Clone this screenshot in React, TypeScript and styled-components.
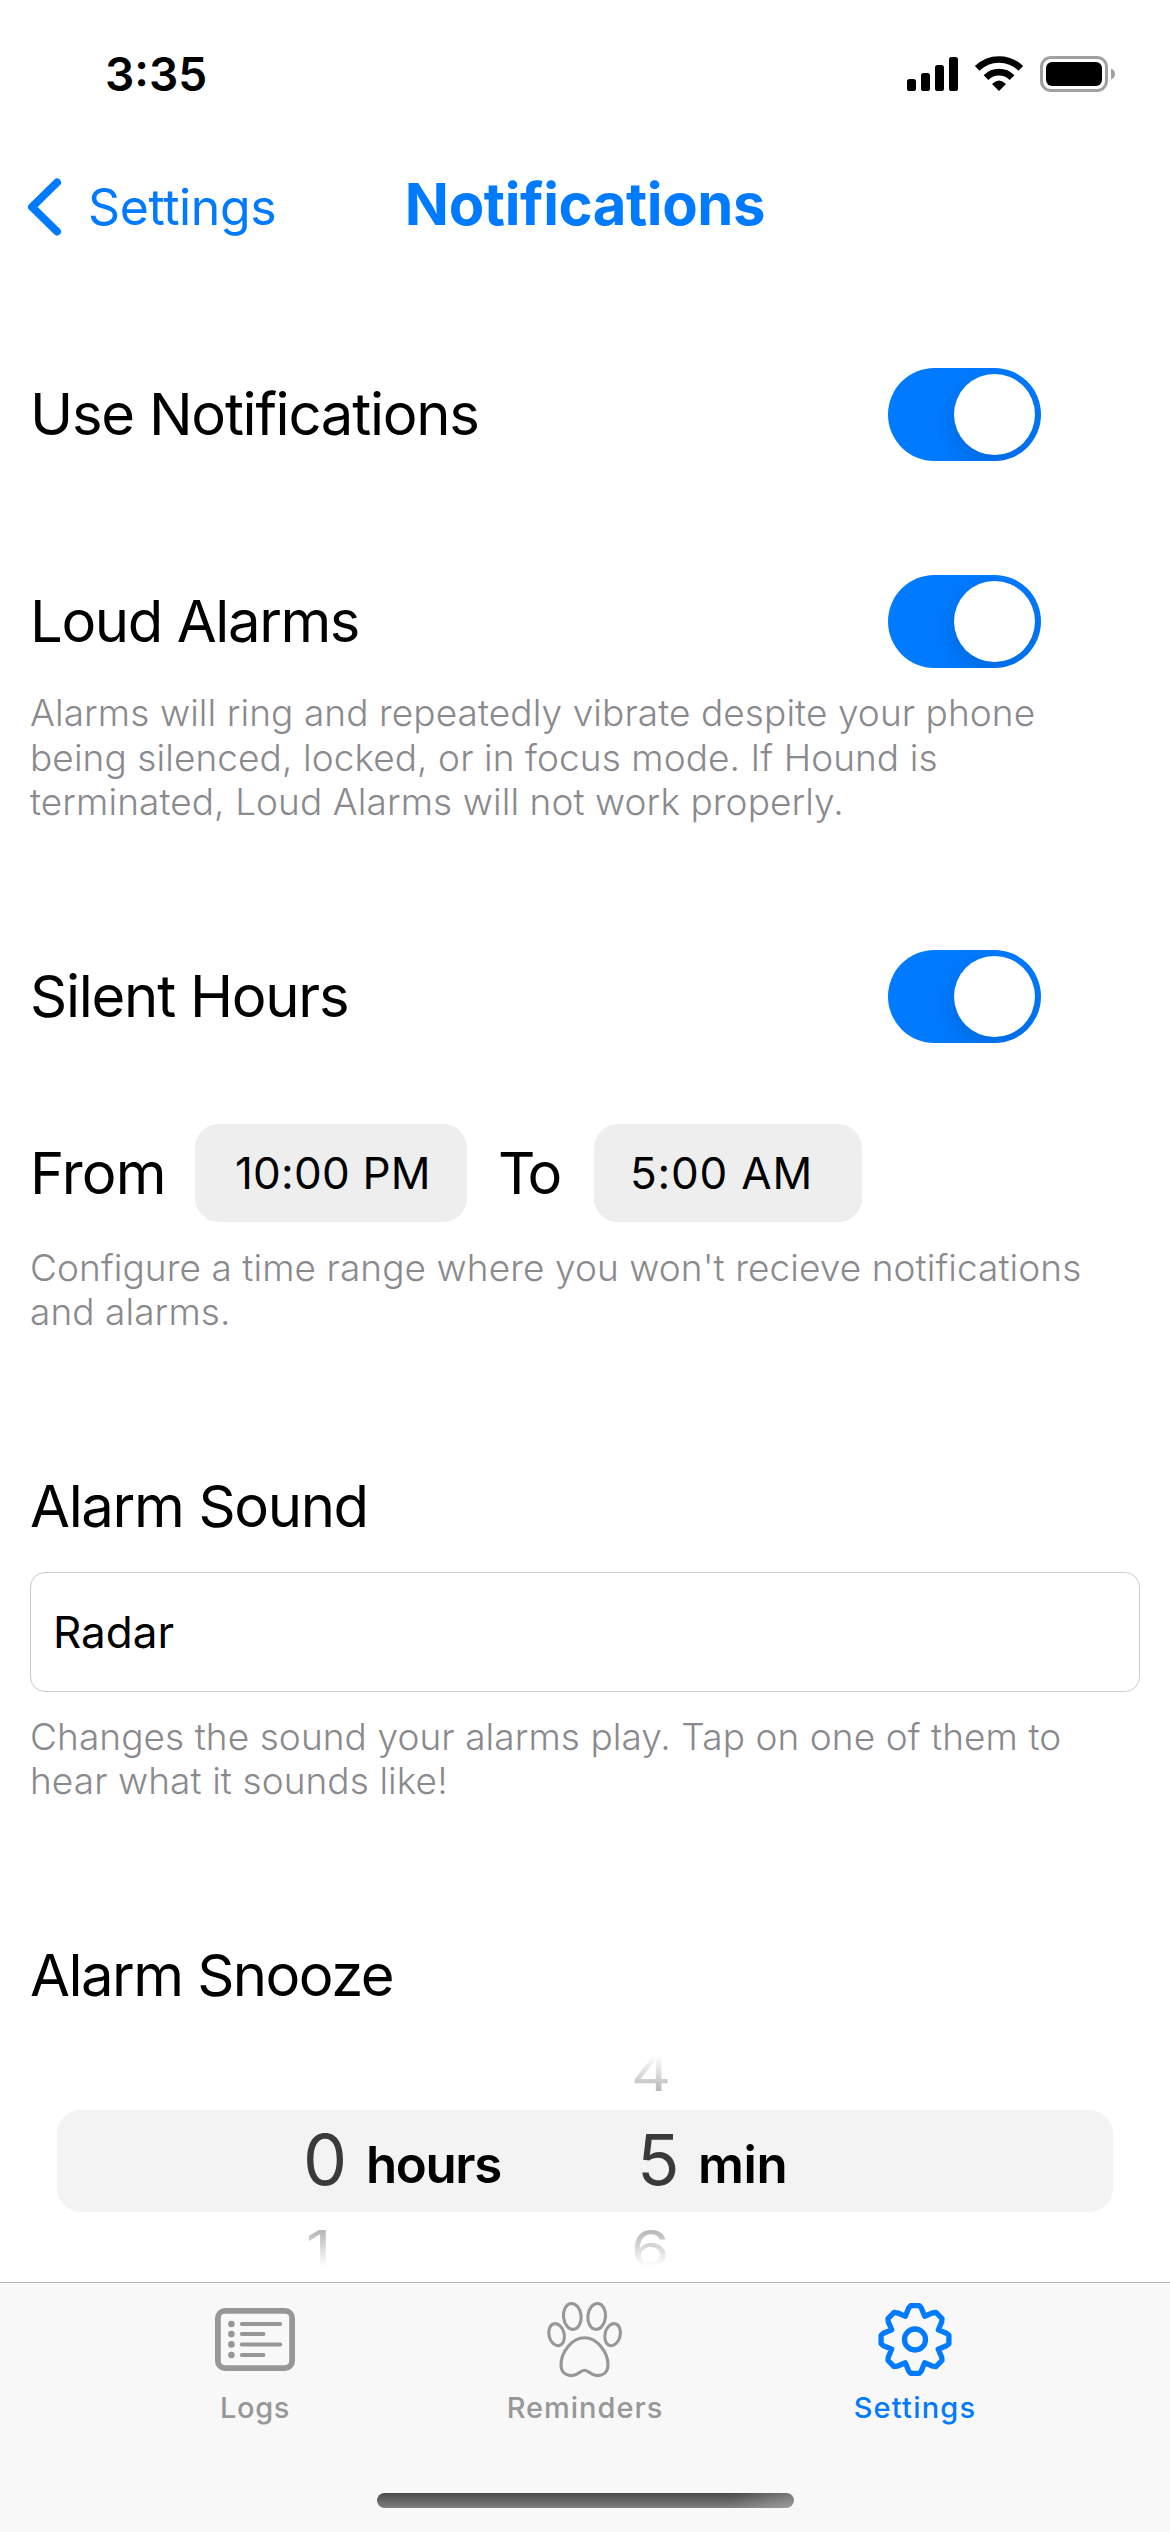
import React from 'react';
import styled, { createGlobalStyle } from 'styled-components';

const BLUE = '#007aff';
const GRAY = '#979797';

const GlobalStyle = createGlobalStyle`
  * { box-sizing: border-box; }
  body { margin: 0; background: #fff; }
`;

const Screen = styled.div`
  width: 1170px;
  height: 2532px;
  display: flex;
  flex-direction: column;
  overflow: hidden;
  background: #fff;
  color: #000;
  font-family: Inter, 'Liberation Sans', sans-serif;
  white-space: nowrap;
`;

const StatusBar = styled.header`
  height: 148px;
  flex: none;
  display: flex;
  align-items: center;
  justify-content: space-between;
  padding: 0 50px 0 105px;
`;

const Clock = styled.time`
  font-size: 46px;
  font-weight: 600;
`;

const NavBar = styled.nav`
  height: 118px;
  flex: none;
  display: grid;
  grid-template-columns: 1fr auto 1fr;
  align-items: center;
  color: ${BLUE};
`;

const BackLink = styled.a`
  display: flex;
  align-items: center;
  gap: 23px;
  padding-left: 25px;
  font-size: 50px;
  letter-spacing: -0.4px;
`;

const Title = styled.h1`
  margin: 0 0 7px;
  font-size: 58px;
  font-weight: 700;
  letter-spacing: -0.4px;
`;

const Content = styled.main`
  height: 2016px;
  flex: none;
  display: flex;
  flex-direction: column;
  padding: 0 30px;
`;

const SettingRow = styled.div<{ $top: number }>`
  height: 93px;
  flex: none;
  display: flex;
  align-items: center;
  justify-content: space-between;
  margin-top: ${(p) => p.$top}px;
  padding-right: 99px;
`;

const Label = styled.h2<{ $track: number; $top?: number; $width?: number }>`
  flex: none;
  margin: ${(p) => p.$top ?? 0}px 0 0;
  width: ${(p) => (p.$width ? `${p.$width}px` : 'auto')};
  font-size: 58px;
  font-weight: 400;
  line-height: 70px;
  letter-spacing: ${(p) => p.$track}px;

  ${SettingRow} & {
    padding-bottom: 2px;
  }
`;

const Switch = styled.div`
  width: 153px;
  height: 93px;
  display: flex;
  justify-content: flex-end;
  padding: 6px;
  border-radius: 47px;
  overflow: hidden;
  background: ${BLUE};
`;

const Knob = styled.div`
  width: 81px;
  height: 81px;
  border-radius: 50%;
  background: #fff;
  box-shadow: 0 9px 24px rgba(0, 0, 0, 0.15);
`;

const Description = styled.p<{ $top: number }>`
  flex: none;
  margin: ${(p) => p.$top}px 0 0;
  color: #8a8a8e;
  font-size: 37px;
  font-weight: 300;
  line-height: 44.5px;
  letter-spacing: 0.08px;
`;

const TimeRange = styled.div`
  height: 98px;
  flex: none;
  display: flex;
  align-items: center;
  margin-top: 81px;
`;

const TimeButton = styled.div<{ $width: number; $inset: number; $track: number; $after?: number }>`
  width: ${(p) => p.$width}px;
  height: 98px;
  flex: none;
  margin-right: ${(p) => p.$after ?? 0}px;
  padding-left: ${(p) => p.$inset}px;
  border-radius: 24px;
  background: #eeeeef;
  font-size: 44px;
  line-height: 98px;
  letter-spacing: ${(p) => p.$track}px;
`;

const SoundField = styled.div`
  height: 120px;
  flex: none;
  margin-top: 31px;
  padding-left: 22px;
  border: 1px solid #cbcbcd;
  border-radius: 15px;
  font-size: 44px;
  line-height: 118px;
`;

const Picker = styled.div`
  flex: none;
  display: flex;
  flex-direction: column;
  gap: 7px;
  margin-top: 33px;
  padding: 0 27px;
`;

const columns = '246px 63px 271px 61px 1fr';

const WheelRow = styled.div<{ $fade: 'top' | 'bottom' }>`
  height: 60px;
  display: grid;
  grid-template-columns: ${columns};
  color: #b8b8b8;
  font-size: 62px;
  line-height: 60px;
  mask-image: linear-gradient(to ${(p) => p.$fade}, #000 12px, transparent 47px);
`;

const WheelDigit = styled.span<{ $column: number; $shift: number }>`
  grid-column: ${(p) => p.$column};
  margin-left: ${(p) => p.$shift}px;
  transform: scaleY(0.82);
`;

const SelectedRow = styled.div`
  height: 102px;
  display: grid;
  grid-template-columns: ${columns};
  border-radius: 24px;
  background: #f3f3f4;
`;

const SelectedDigit = styled.span<{ $column: number }>`
  grid-column: ${(p) => p.$column};
  color: #3a3a3a;
  font-size: 70px;
  font-weight: 400;
  line-height: 100px;
`;

const Unit = styled.span<{ $track: number }>`
  font-size: 51px;
  font-weight: 600;
  line-height: 109px;
  letter-spacing: ${(p) => p.$track}px;
`;

const TabBar = styled.footer`
  height: 250px;
  flex: none;
  display: flex;
  flex-direction: column;
  align-items: center;
  border-top: 1px solid #b3b3b3;
  background: #f8f8f8;
`;

const Tabs = styled.div`
  display: grid;
  grid-template-columns: repeat(3, 330px);
  height: 210px;
  padding-top: 17px;
`;

const Tab = styled.div<{ $active?: boolean; $track: number }>`
  display: flex;
  flex-direction: column;
  align-items: center;
  gap: 10px;
  color: ${(p) => (p.$active ? BLUE : GRAY)};
  font-size: 29px;
  font-weight: 500;
  line-height: 36px;
  letter-spacing: ${(p) => p.$track}px;
`;

const HomeIndicator = styled.div`
  width: 417px;
  height: 15px;
  border-radius: 8px;
  background: linear-gradient(to right, transparent 85%, rgba(255, 255, 255, 0.25)),
    linear-gradient(#494949, #808080);
`;

const StatusIcons = () => (
  <svg width="220" height="48" viewBox="0 0 220 48" fill="none">
    <g fill="#000">
      <rect x="7" y="29" width="9" height="12" rx="2.6" />
      <rect x="21" y="23" width="9" height="18" rx="2.6" />
      <rect x="35" y="15" width="9" height="26" rx="2.6" />
      <rect x="49" y="7" width="9" height="34" rx="2.6" />
      <path d="M92 34Q99 27 106 34L99 41Z" />
      <rect x="146" y="12" width="56" height="24" rx="6" />
    </g>
    <path d="M77.2 18.4A31 31 0 0 1 120.8 18.4" stroke="#000" strokeWidth="6.6" />
    <path d="M86 27.6A18.2 18.2 0 0 1 112 27.6" stroke="#000" strokeWidth="6.6" />
    <rect x="141.5" y="7.5" width="65" height="33" rx="9.5" stroke="#a0a0a0" strokeWidth="3" />
    <path d="M211 18.5Q215 20 215 24Q215 28 211 29.5Z" fill="#a0a0a0" />
  </svg>
);

const Chevron = () => (
  <svg width="40" height="64" viewBox="0 0 40 64" fill="none">
    <path
      d="M32 7.5L7 32L32 56.5"
      stroke="currentColor"
      strokeWidth="8"
      strokeLinecap="round"
      strokeLinejoin="round"
    />
  </svg>
);

const LogsIcon = () => (
  <svg width="80" height="80" viewBox="0 0 80 80" fill="none" stroke="currentColor">
    <rect x="2.9" y="10.9" width="74.2" height="57.2" rx="7" strokeWidth="5.8" />
    {[24, 34.1, 44.4, 55].map((y, i) => (
      <g key={y}>
        <circle cx="16.4" cy={y} r="3.3" fill="currentColor" stroke="none" />
        <path d={`M26.8 ${y}H${i % 2 ? 48.5 : 65.2}`} strokeWidth="4" strokeLinecap="round" />
      </g>
    ))}
  </svg>
);

const PawIcon = () => (
  <svg width="80" height="80" viewBox="0 0 80 80" fill="none" stroke="currentColor" strokeWidth="3.1">
    <ellipse cx="27.3" cy="16.4" rx="8.8" ry="13" transform="rotate(-6 27.3 16.4)" />
    <ellipse cx="51.7" cy="16.4" rx="8.8" ry="13" transform="rotate(6 51.7 16.4)" />
    <ellipse cx="11.6" cy="34.7" rx="7.6" ry="11.2" transform="rotate(-14 11.6 34.7)" />
    <ellipse cx="67.6" cy="34.7" rx="7.6" ry="11.2" transform="rotate(14 67.6 34.7)" />
    <path d="M39.5 37.7C27 37.7 16 52 16 65C16 72 20.5 75.6 27 75.6C33.5 75.6 35 70.2 39.5 70.2C44 70.2 45.5 75.6 52 75.6C58.5 75.6 63 72 63 65C63 52 52 37.7 39.5 37.7Z" />
  </svg>
);

const tooth: [number, number][] = [
  [-9.6, -23.3],
  [-6.3, -31.5],
  [-4.3, -33.9],
  [4.3, -33.9],
  [6.3, -31.5],
];

const gearPath = Array.from({ length: 8 }, (_, i) => {
  const a = (i * Math.PI) / 4;
  return tooth
    .map(([x, y]) => {
      const px = 40 + x * Math.cos(a) - y * Math.sin(a);
      const py = 39.5 + x * Math.sin(a) + y * Math.cos(a);
      return `${px.toFixed(2)} ${py.toFixed(2)}`;
    })
    .join('L');
}).join('L');

const GearIcon = () => (
  <svg width="80" height="80" viewBox="0 0 80 80" fill="none" stroke="currentColor" strokeWidth="5.3">
    <path d={`M${gearPath}Z`} strokeLinejoin="round" />
    <circle cx="40" cy="39.5" r="10.5" />
  </svg>
);

const Toggle = () => (
  <Switch role="switch" aria-checked="true">
    <Knob />
  </Switch>
);

export default function App() {
  return (
    <Screen>
      <GlobalStyle />
      <StatusBar>
        <Clock>3:35</Clock>
        <StatusIcons />
      </StatusBar>
      <NavBar>
        <BackLink>
          <Chevron />
          Settings
        </BackLink>
        <Title>Notifications</Title>
      </NavBar>
      <Content>
        <SettingRow $top={102}>
          <Label $track={-1.25}>Use Notifications</Label>
          <Toggle />
        </SettingRow>
        <SettingRow $top={114}>
          <Label $track={-1.4}>Loud Alarms</Label>
          <Toggle />
        </SettingRow>
        <Description $top={23}>
          Alarms will ring and repeatedly vibrate despite your phone
          <br />
          being silenced, locked, or in focus mode. If Hound is
          <br />
          terminated, Loud Alarms will not work properly.
        </Description>
        <SettingRow $top={125.5}>
          <Label $track={-1.25}>Silent Hours</Label>
          <Toggle />
        </SettingRow>
        <TimeRange>
          <Label $track={-0.8} $width={165}>From</Label>
          <TimeButton $width={272} $inset={40} $track={0.2} $after={31}>10:00 PM</TimeButton>
          <Label $track={-3.5} $width={96}>To</Label>
          <TimeButton $width={268} $inset={36} $track={0.8}>5:00 AM</TimeButton>
        </TimeRange>
        <Description $top={23.5}>
          Configure a time range where you won't recieve notifications
          <br />
          and alarms.
        </Description>
        <Label $track={-1.35} $top={136.5}>Alarm Sound</Label>
        <SoundField>Radar</SoundField>
        <Description $top={22.5}>
          Changes the sound your alarms play. Tap on one of them to
          <br />
          hear what it sounds like!
        </Description>
        <Label $track={-1.55} $top={136.5}>Alarm Snooze</Label>
        <Picker>
          <WheelRow $fade="top">
            <WheelDigit $column={4} $shift={-6}>4</WheelDigit>
          </WheelRow>
          <SelectedRow>
            <SelectedDigit $column={2}>0</SelectedDigit>
            <Unit $track={-1.4}>hours</Unit>
            <SelectedDigit $column={4}>5</SelectedDigit>
            <Unit $track={-0.4}>min</Unit>
          </SelectedRow>
          <WheelRow $fade="bottom">
            <WheelDigit $column={2} $shift={3}>1</WheelDigit>
            <WheelDigit $column={4} $shift={-6}>6</WheelDigit>
          </WheelRow>
        </Picker>
      </Content>
      <TabBar>
        <Tabs>
          <Tab $track={0.6}>
            <LogsIcon />
            Logs
          </Tab>
          <Tab $track={1}>
            <PawIcon />
            Reminders
          </Tab>
          <Tab $active $track={1.2}>
            <GearIcon />
            Settings
          </Tab>
        </Tabs>
        <HomeIndicator />
      </TabBar>
    </Screen>
  );
}
